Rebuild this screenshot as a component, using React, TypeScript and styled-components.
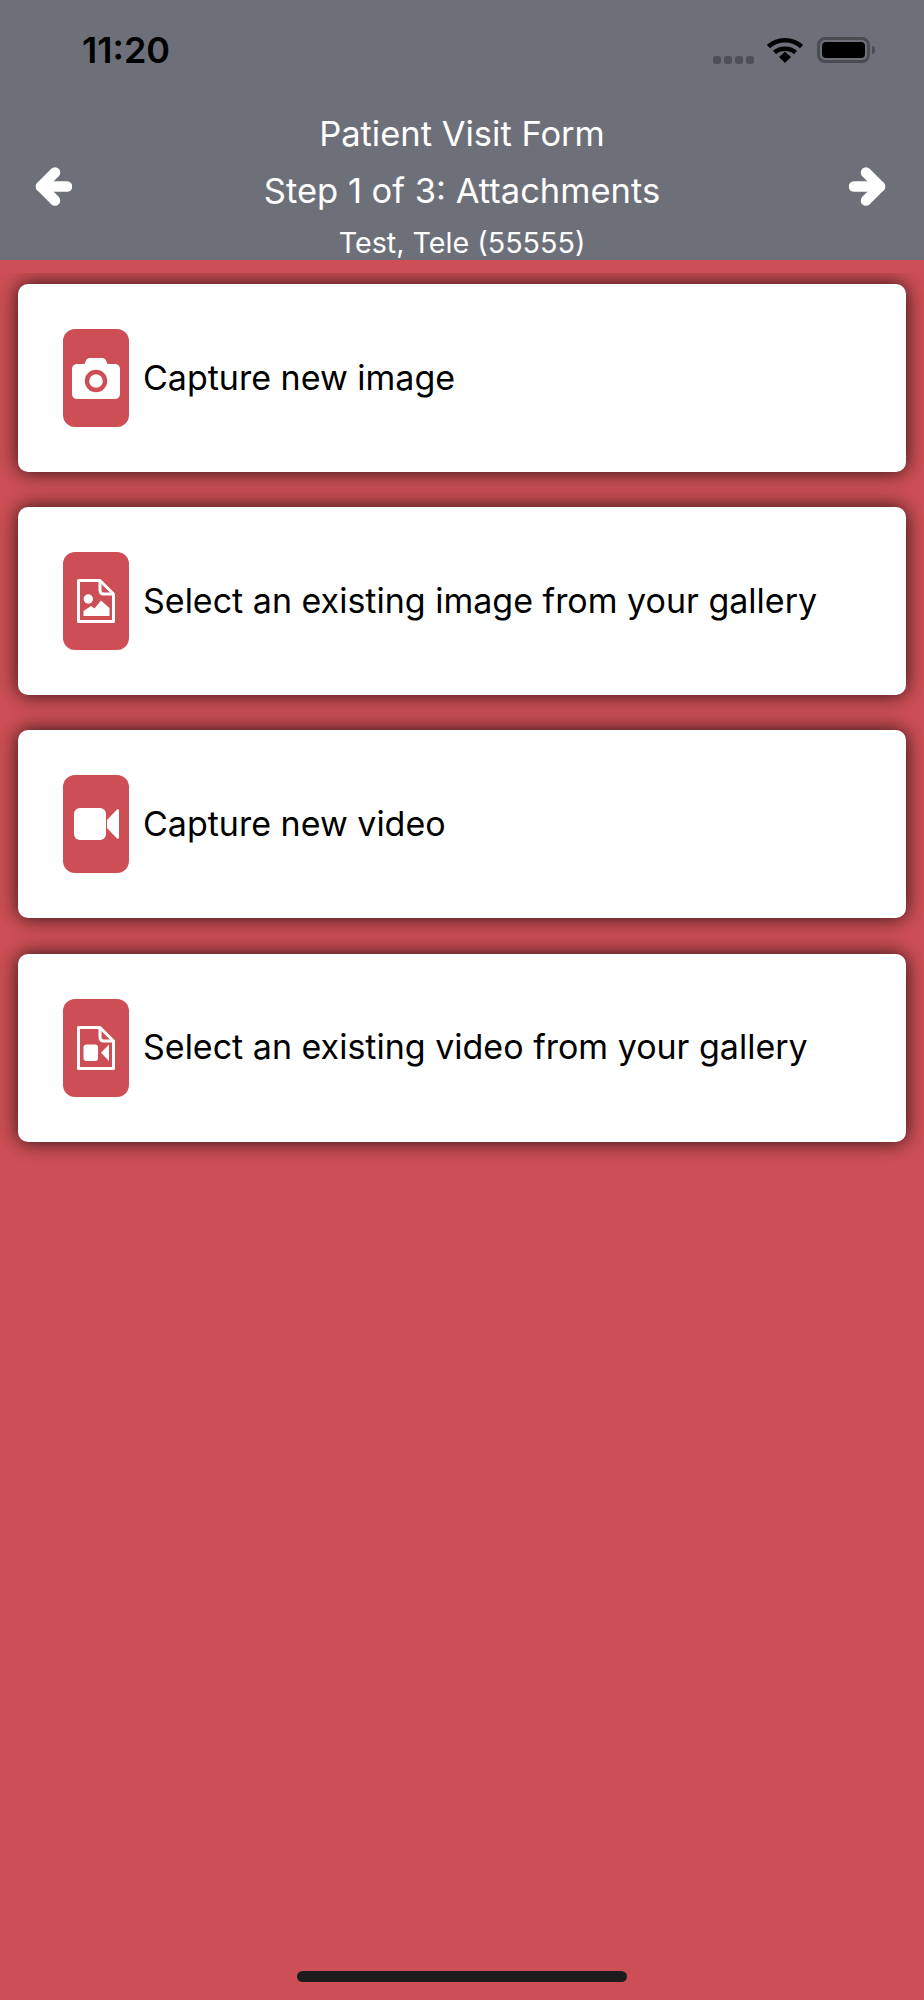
import React from 'react';
import styled, { createGlobalStyle } from 'styled-components';

const GlobalStyle = createGlobalStyle`
  html, body {
    margin: 0;
    padding: 0;
    background: #cd4f55;
  }
  body {
    font-family: Inter, "Liberation Sans", sans-serif;
  }
`;

const Page = styled.div`
  width: 924px;
  height: 2000px;
  display: flex;
  flex-direction: column;
  overflow: hidden;
  background: #cd4f55;
`;

const Header = styled.header`
  height: 260px;
  flex: none;
  background: #6e7079;
  color: #fff;
  box-sizing: border-box;
`;

const StatusBar = styled.div`
  height: 100px;
  box-sizing: border-box;
  padding: 30px 54px 0 82px;
  display: flex;
  align-items: flex-start;
  justify-content: space-between;
`;

const Time = styled.span`
  font-size: 36px;
  font-weight: 600;
  line-height: 41px;
  color: #000;
`;

const StatusIcons = styled.div`
  display: flex;
  align-items: flex-start;
  padding-top: 7px;
`;

const SignalDots = styled.div`
  display: flex;
  gap: 3px;
  margin: 19px 13px 0 0;
`;

const Dot = styled.span`
  width: 8px;
  height: 8px;
  border-radius: 2.5px;
  background: #4e5057;
`;

const Battery = styled.div`
  margin-left: 14px;
  width: 53px;
  height: 26px;
  box-sizing: border-box;
  border: 3px solid #4a4c52;
  border-radius: 8px;
  padding: 2px;
  position: relative;
  &::before {
    content: '';
    display: block;
    height: 100%;
    background: #000;
    border-radius: 4px;
  }
  &::after {
    content: '';
    position: absolute;
    right: -8px;
    top: 6px;
    width: 3px;
    height: 8px;
    background: #4a4c52;
    border-radius: 0 3px 3px 0;
  }
`;

const TitleRow = styled.div`
  display: grid;
  grid-template-columns: 1fr auto 1fr;
  padding: 0 35px;
  margin-top: 5px;
`;

const ArrowBox = styled.div<{ $end?: boolean }>`
  display: flex;
  align-items: center;
  height: 39px;
  margin-top: 62px;
  justify-content: ${(p) => (p.$end ? 'flex-end' : 'flex-start')};
  padding-right: ${(p) => (p.$end ? 3 : 0)}px;
`;

const Titles = styled.div`
  text-align: center;
`;

const TitleLine = styled.div<{ $small?: boolean }>`
  font-size: ${(p) => (p.$small ? 28.7 : 34.5)}px;
  line-height: ${(p) => (p.$small ? 47 : 57)}px;
  white-space: nowrap;
`;

const List = styled.main`
  margin-top: 13px;
  overflow: hidden;
  display: flex;
  flex-direction: column;
  gap: 35.2px;
  padding: 11px 18px 24px;
`;

const Card = styled.button`
  height: 188px;
  border: none;
  border-radius: 10px;
  background: #fff;
  box-shadow: 0 0 20px rgba(0, 0, 0, 0.8);
  display: flex;
  align-items: center;
  gap: 14px;
  padding: 0 0 0 45px;
  font-family: inherit;
  text-align: left;
`;

const IconTile = styled.span`
  width: 66px;
  height: 98px;
  flex: none;
  border-radius: 12px;
  background: #cd4f55;
  display: flex;
  align-items: center;
  justify-content: center;
`;

const CardLabel = styled.span`
  font-size: 34px;
  color: #000;
  white-space: nowrap;
  padding-bottom: 2px;
`;

const HomeBar = styled.div`
  margin: auto auto 18px;
  width: 330px;
  height: 11px;
  border-radius: 6px;
  background: #1c1c1c;
`;

const WifiIcon = () => (
  <svg width="36" height="26" viewBox="0 0 36 26" fill="none">
    <path d="M1.5 9.5C10.5 1 25.500 1 34.500 9.500" stroke="#000" strokeWidth="4.500" />
    <path d="M7.500 15.500C13 10.500 23 10.500 28.500 15.500" stroke="#000" strokeWidth="4.500" />
    <path d="M12 20L18 14.800L24 20L18 26Z" fill="#000" />
  </svg>
);

const ArrowIcon = ({ flip }: { flip?: boolean }) => (
  <svg
    width="37"
    height="39"
    viewBox="0 0 37 39"
    fill="none"
    stroke="#fff"
    strokeWidth="10.500"
    strokeLinecap="round"
    strokeLinejoin="round"
    transform={flip ? 'scale(-1 1)' : undefined}
  >
    <path d="M20 5.500L6 19.500L20 33.500" />
    <path d="M6 19.500H32" />
  </svg>
);

const CameraIcon = () => (
  <svg width="48" height="41" viewBox="0 0 48 41">
    <path
      d="M5 6H12.500L14 2.500C14.600 1 16 0 17.500 0H30.500C32 0 33.400 1 34 2.500L35.500 6H43C45.800 6 48 8.200 48 11V36C48 38.800 45.800 41 43 41H5C2.200 41 0 38.800 0 36V11C0 8.200 2.200 6 5 6Z"
      fill="#fff"
    />
    <circle cx="24" cy="23" r="9" fill="none" stroke="#cd4f55" strokeWidth="4.400" />
  </svg>
);

const VideoIcon = () => (
  <svg width="45" height="32" viewBox="0 0 45 32">
    <rect width="32" height="32" rx="6" fill="#fff" />
    <path d="M33 12L43 1.500C43.700 0.800 45 1.300 45 2.300V29.700C45 30.700 43.700 31.200 43 30.500L33 20Z" fill="#fff" />
  </svg>
);

const FileOutline = ({ children }: { children: React.ReactNode }) => (
  <svg width="38" height="44" viewBox="0 0 38 44">
    <path d="M1.500 1.500H23L36.500 15V42.500H1.500Z" fill="none" stroke="#fff" strokeWidth="3" strokeLinejoin="round" />
    <path d="M23 1.500V11C23 13.500 24.500 15 27 15H36.500" fill="none" stroke="#fff" strokeWidth="3" />
    {children}
  </svg>
);

const FileImageIcon = () => (
  <FileOutline>
    <circle cx="11.300" cy="20" r="4.700" fill="#fff" />
    <path d="M6.500 37V32L14 27L17.500 29.500L24 21.500L32.500 29V37Z" fill="#fff" />
  </FileOutline>
);

const FileVideoIcon = () => (
  <FileOutline>
    <rect x="6.500" y="18.500" width="14.500" height="16.500" rx="3" fill="#fff" />
    <path d="M24 26.700L32 18.500V35Z" fill="#fff" />
  </FileOutline>
);

const actions = [
  { label: 'Capture new image', icon: <CameraIcon /> },
  { label: 'Select an existing image from your gallery', icon: <FileImageIcon /> },
  { label: 'Capture new video', icon: <VideoIcon /> },
  { label: 'Select an existing video from your gallery', icon: <FileVideoIcon /> },
];

const App = () => (
  <Page>
    <GlobalStyle />
    <Header>
      <StatusBar>
        <Time>11:20</Time>
        <StatusIcons>
          <SignalDots>
            <Dot />
            <Dot />
            <Dot />
            <Dot />
          </SignalDots>
          <WifiIcon />
          <Battery />
        </StatusIcons>
      </StatusBar>
      <TitleRow>
        <ArrowBox>
          <ArrowIcon />
        </ArrowBox>
        <Titles>
          <TitleLine>Patient Visit Form</TitleLine>
          <TitleLine>Step 1 of 3: Attachments</TitleLine>
          <TitleLine $small>Test, Tele (55555)</TitleLine>
        </Titles>
        <ArrowBox $end>
          <ArrowIcon flip />
        </ArrowBox>
      </TitleRow>
    </Header>
    <List>
      {actions.map((action) => (
        <Card key={action.label}>
          <IconTile>{action.icon}</IconTile>
          <CardLabel>{action.label}</CardLabel>
        </Card>
      ))}
    </List>
    <HomeBar />
  </Page>
);

export default App;
